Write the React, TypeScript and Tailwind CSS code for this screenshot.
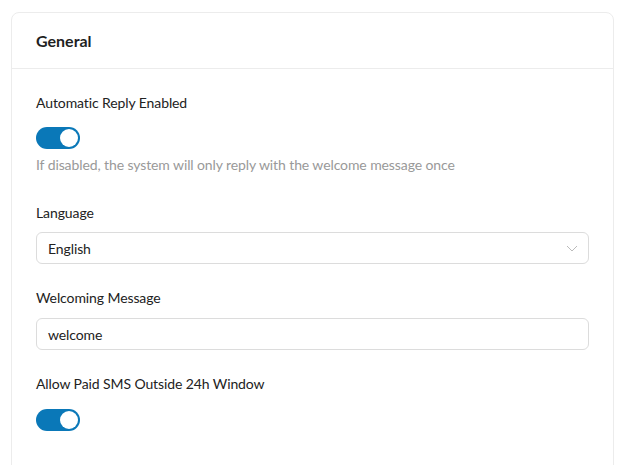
import React from "react";

function Toggle() {
  return (
    <div className="w-[44px] h-[22px] rounded-full bg-[#0a78b8] relative">
      <div className="absolute right-[2px] top-[2px] w-[18px] h-[18px] rounded-full bg-white" />
    </div>
  );
}

export default function App() {
  return (
    <div className="w-[622px] h-[465px] bg-white pt-[12px] pl-[11px] overflow-hidden" style={{ fontFamily: "Lato, 'Noto Sans', sans-serif" }}>
      <div className="w-[603px] h-[480px] border border-[#ececec] rounded-[8px]">
        <div className="h-[56px] border-b border-[#ececec] flex items-center px-[24px]">
          <span className="text-[16px] font-bold text-[#1f1f1f]">General</span>
        </div>
        <div className="px-[24px] pt-[24px] text-[#222] tracking-[-0.1px]">
          <div className="text-[14px] leading-[20px]">Automatic Reply Enabled</div>
          <div className="mt-[14px]"><Toggle /></div>
          <div className="mt-[6px] text-[14px] leading-[20px] text-[#999]">If disabled, the system will only reply with the welcome message once</div>

          <div className="mt-[28px] text-[14px] leading-[20px]">Language</div>
          <div className="mt-[9px] h-[32px] border border-[#dcdcdc] rounded-[6px] flex items-center justify-between pl-[11px] pr-[10px]">
            <span className="text-[14px]">English</span>
            <svg width="12" height="12" viewBox="0 0 12 12" fill="none" stroke="#bbb" strokeWidth="1"><path d="M1 4l5 5 5-5" /></svg>
          </div>

          <div className="mt-[24px] text-[14px] leading-[20px]">Welcoming Message</div>
          <div className="mt-[10px] h-[32px] border border-[#dcdcdc] rounded-[6px] flex items-center pl-[11px]">
            <span className="text-[14px]">welcome</span>
          </div>

          <div className="mt-[24px] text-[14px] leading-[20px]">Allow Paid SMS Outside 24h Window</div>
          <div className="mt-[15px]"><Toggle /></div>
        </div>
      </div>
    </div>
  );
}
